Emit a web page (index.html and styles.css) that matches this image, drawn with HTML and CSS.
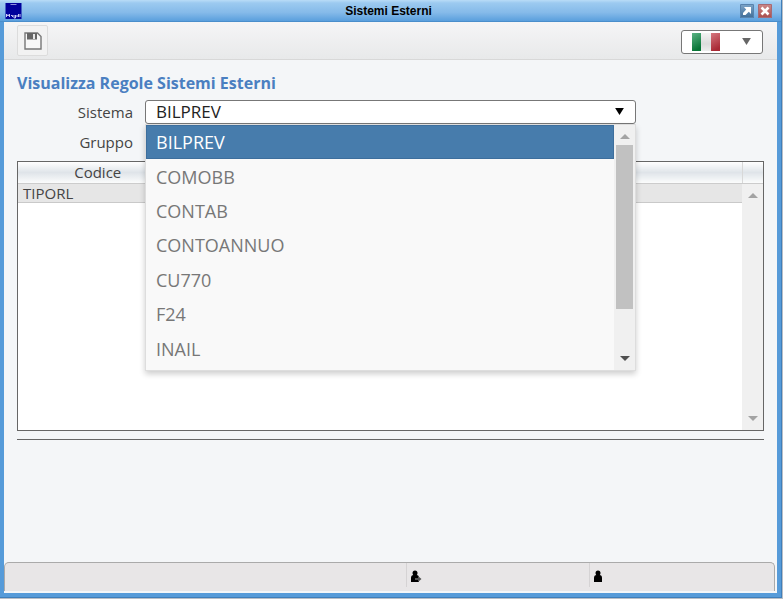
FILE: index.html
```html
<!DOCTYPE html>
<html lang="it">
<head>
    <meta charset="UTF-8">
    <meta name="viewport" content="width=device-width, initial-scale=1.0">
    <title>Sistemi Esterni</title>
    <link rel="stylesheet" href="styles.css">
</head>
<body>
    <div class="window">
        <header class="title-bar">
            <svg class="logo" viewBox="0 0 16 16" aria-hidden="true">
                <rect width="16" height="16" fill="#00009c"/>
                <path d="M5 1.500h6" stroke="#8d8ddd"/>
                <path d="M1 14v-3l1.500 2L4 11v3M5.500 12.500h1.500V14M8.500 12v3h1.500v-3M11.500 12v2M13 11v3M14.500 11v3" fill="none" stroke="#c9c9f2"/>
            </svg>
            <h1>Sistemi Esterni</h1>
            <div class="window-buttons">
                <button type="button" class="win-btn" aria-label="Ingrandisci">
                    <svg viewBox="0 0 14 14"><path d="M4 3h7v7L8.800 7.800 5.500 11 3 11V9l3.200-3.500z" fill="#fff"/></svg>
                </button>
                <button type="button" class="win-btn close" aria-label="Chiudi">
                    <svg viewBox="0 0 14 14"><path d="M3.500 3.500l7 7M10.500 3.500l-7 7" stroke="#fff" stroke-width="2.600"/></svg>
                </button>
            </div>
        </header>

        <div class="content">
            <div class="toolbar">
                <button type="button" class="tool-btn" aria-label="Salva">
                    <svg viewBox="0 0 18 18">
                        <path d="M1 1h12.500L17 4.500V17H1z" fill="#f8f8f8" stroke="#777" stroke-width="1.400"/>
                        <path d="M3 1h10v6.500H3z" fill="#666"/>
                        <path d="M9 2h2v5H9z" fill="#e8e8e8"/>
                    </svg>
                </button>
                <div class="language">
                    <select aria-label="Lingua"><option></option></select>
                    <svg class="flag" viewBox="0 0 28 18" aria-hidden="true">
                        <defs>
                            <linearGradient id="green" x2="0.300" y2="1"><stop stop-color="#5bb284"/><stop offset="1" stop-color="#087536"/></linearGradient>
                            <linearGradient id="white" x2="0" y2="1"><stop stop-color="#f4f4f4"/><stop offset="0.600" stop-color="#dcdcdc"/><stop offset="1" stop-color="#eee"/></linearGradient>
                            <linearGradient id="red" x2="0.300" y2="1"><stop stop-color="#d5777e"/><stop offset="1" stop-color="#a92a35"/></linearGradient>
                        </defs>
                        <rect width="9" height="18" fill="url(#green)"/>
                        <rect x="9" width="10" height="18" fill="url(#white)"/>
                        <rect x="19" width="9" height="18" fill="url(#red)"/>
                    </svg>
                    <svg class="arrow grey" viewBox="0 0 10 8" aria-hidden="true"><path d="M0 0h10L5 8z"/></svg>
                </div>
            </div>

            <main>
                <h2>Visualizza Regole Sistemi Esterni</h2>

                <form class="filters">
                    <label for="sistema">Sistema</label>
                    <div class="field">
                        <select id="sistema"><option>BILPREV</option></select>
                        <svg class="arrow" viewBox="0 0 10 8" aria-hidden="true"><path d="M0 0h10L5 8z"/></svg>
                        <div class="dropdown">
                            <ul role="listbox" aria-label="Sistema">
                                <li role="option" aria-selected="true" class="selected">BILPREV</li>
                                <li role="option">COMOBB</li>
                                <li role="option">CONTAB</li>
                                <li role="option">CONTOANNUO</li>
                                <li role="option">CU770</li>
                                <li role="option">F24</li>
                                <li role="option">INAIL</li>
                            </ul>
                            <div class="scrollbar">
                                <span class="up"></span>
                                <span class="track"><span class="thumb"></span></span>
                                <span class="down active"></span>
                            </div>
                        </div>
                    </div>
                    <label for="gruppo">Gruppo</label>
                    <div class="field">
                        <select id="gruppo" class="small"><option></option></select>
                    </div>
                </form>

                <div class="grid">
                    <table>
                        <colgroup>
                            <col class="col-code">
                            <col>
                            <col class="col-scroll">
                        </colgroup>
                        <thead>
                            <tr><th>Codice</th><th></th><th></th></tr>
                        </thead>
                        <tbody>
                            <tr><td>TIPORL</td><td></td><td class="blank"></td></tr>
                        </tbody>
                    </table>
                    <div class="scrollbar">
                        <span class="up"></span>
                        <span class="track"></span>
                        <span class="down"></span>
                    </div>
                </div>
                <hr>
            </main>

            <footer class="status-bar">
                <div></div>
                <div>
                    <svg viewBox="0 0 12 12" aria-hidden="true">
                        <circle cx="5" cy="3" r="2.500"/>
                        <path d="M1 12V8q0-3 2.500-3h3Q9 5 9 8v4z"/>
                        <path d="M5 8h3V6l3.500 3L8 12v-2H5z" fill="#555"/>
                    </svg>
                </div>
                <div>
                    <svg viewBox="0 0 12 12" aria-hidden="true">
                        <circle cx="5" cy="3" r="2.500"/>
                        <path d="M1 12V8q0-3 2.500-3h3Q9 5 9 8v4z"/>
                    </svg>
                </div>
            </footer>
        </div>
    </div>
</body>
</html>
```

FILE: styles.css
```css
* {
    box-sizing: border-box;
}

body {
    margin: 0;
    padding: 0 1px 1px 0;
    height: 100vh;
    overflow: hidden;
    font-family: 'Open Sans', 'Noto Sans', sans-serif;
    color: #444;
    background: #b9bec6;
}

button, select {
    font-family: inherit;
    padding: 0;
    margin: 0;
}

svg {
    display: block;
}

.window {
    display: flex;
    flex-direction: column;
    height: 100%;
    padding: 0 4px 4px;
    background: #569bd9;
    border-right: 1px solid #3f7fba;
    border-bottom: 1px solid #3f7fba;
}

/* title bar */
.title-bar {
    display: grid;
    grid-template-columns: 40px 1fr 40px;
    align-items: center;
    height: 22px;
    margin: 0 -4px;
    padding: 0 9px 0 5px;
    background: linear-gradient(to bottom, #b9dcf7, #9ccaf0 3px, #85bae9 60%, #5a9fdd);
    border-bottom: 1px solid #4a8ecb;
}

.logo {
    width: 17px;
    height: 16px;
}

.title-bar h1 {
    margin: 0;
    font: bold 12px/20px 'Liberation Sans', Arial, sans-serif;
    color: #000;
    text-align: center;
}

.window-buttons {
    display: flex;
    justify-content: flex-end;
    gap: 4px;
}

.win-btn {
    width: 14px;
    height: 14px;
    border: 0;
    border-radius: 1px;
    background: linear-gradient(to bottom, #7fa6c9, #3e6c97);
    outline: 1px solid #5883ad;
    outline-offset: -1px;
}

.win-btn.close {
    background: linear-gradient(to bottom, #cc8b8b, #a84c4c);
    outline-color: #a56a74;
}

.content {
    display: flex;
    flex: 1;
    flex-direction: column;
    background: #f4f6f8;
}

/* toolbar */
.toolbar {
    display: flex;
    align-items: center;
    justify-content: space-between;
    height: 38px;
    padding: 0 14px 0 13px;
    background: linear-gradient(to bottom, #f5f5f6, #e8e9ea);
    border-bottom: 1px solid #d8d8d8;
}

.tool-btn {
    display: flex;
    align-items: center;
    justify-content: center;
    width: 31px;
    height: 31px;
    background: #f2f2f2;
    border: 1px solid #dcdcdc;
    border-radius: 2px;
}

.tool-btn svg {
    width: 18px;
    height: 18px;
}

.language {
    position: relative;
    width: 82px;
    margin-top: 2px;
}

select {
    display: block;
    width: 100%;
    height: 24px;
    padding: 0 10px;
    appearance: none;
    background: #fff;
    border: 1px solid #777;
    border-radius: 3px;
    color: #222;
    font-size: 17px;
    line-height: 22px;
}

.flag {
    position: absolute;
    top: 3px;
    left: 11px;
    width: 28px;
    height: 18px;
    pointer-events: none;
}

.arrow {
    position: absolute;
    top: 8px;
    right: 12px;
    width: 9px;
    height: 7px;
    fill: #000;
    pointer-events: none;
}

.arrow.grey {
    fill: #666;
}

/* form */
main {
    flex: 1;
    padding: 12px 13px 0;
}

h2 {
    margin: 0 0 6px;
    font-size: 16px;
    line-height: 22px;
    color: #4a7fc1;
}

.filters {
    display: grid;
    grid-template-columns: 116px 1fr;
    column-gap: 12px;
    row-gap: 6px;
    align-items: center;
    padding-right: 128px;
}

.filters label {
    font-size: 15px;
    line-height: 24px;
    text-align: right;
}

.field {
    position: relative;
}

.filters .small {
    height: 20px;
}

.dropdown {
    position: absolute;
    z-index: 1;
    top: 24px;
    left: 0;
    right: 0;
    display: flex;
    height: 247px;
    background: #f9f9f9;
    border: 1px solid #ddd;
    box-shadow: 0 3px 6px rgba(0, 0, 0, 0.2);
}

.dropdown ul {
    display: flex;
    flex: 1;
    flex-direction: column;
    margin: 0;
    padding: 0 0 4px;
    list-style: none;
}

.dropdown li {
    display: flex;
    flex: 1;
    align-items: center;
    padding: 0 10px;
    font-size: 18px;
    color: #777;
}

.dropdown li.selected {
    background: #477cac;
    box-shadow: inset 0 0 0 1px #3d6e9c;
    color: #fff;
}

/* scrollbars */
.scrollbar {
    display: flex;
    flex-direction: column;
    align-items: center;
    width: 21px;
    padding: 9px 0;
    background: #f0f0f0;
}

.up, .down {
    width: 0;
    height: 0;
    border: 5px solid transparent;
}

.up {
    border-top-width: 0;
    border-bottom-color: #a3a3a3;
}

.down {
    border-bottom-width: 0;
    border-top-color: #a3a3a3;
}

.down.active {
    border-top-color: #505050;
}

.track {
    flex: 1;
    width: 17px;
    padding: 6px 0;
}

.thumb {
    display: block;
    height: 80%;
    background: #c1c1c1;
}

/* data grid */
.grid {
    position: relative;
    height: 270px;
    margin-top: 7px;
    background: #fff;
    border: 1px solid #666;
}

table {
    width: 100%;
    table-layout: fixed;
    border-collapse: collapse;
    font-size: 15px;
    line-height: 18px;
}

.col-code {
    width: 160px;
}

.col-scroll {
    width: 21px;
}

th {
    height: 21px;
    padding: 0;
    font-weight: normal;
    background: linear-gradient(to bottom, #fff, #dfe4e9 50%, #fbfcfc);
    border-bottom: 1px solid #ccc;
    border-right: 1px solid #d8d8d8;
}

th:last-child {
    border-right: 0;
}

td {
    height: 19px;
    padding: 0 5px;
    background: #e6e6e6;
    border-bottom: 1px solid #c9c9c9;
}

td.blank {
    background: none;
    border: 0;
}

.grid .scrollbar {
    position: absolute;
    top: 22px;
    right: 0;
    bottom: 0;
}

hr {
    height: 1px;
    margin: 8px 0 0;
    background: #666;
    border: 0;
}

/* status bar */
.status-bar {
    display: grid;
    grid-template-columns: 401px 183px 1fr;
    height: 29px;
    margin: 0 2px 2px 0;
    background: #e8e6e7;
    border: 1px solid #aaa;
    border-bottom: 0;
    border-radius: 5px 5px 0 0;
}

.status-bar div {
    height: 24px;
    padding: 7px 3px;
}

.status-bar div + div {
    border-left: 1px solid #d5d3d4;
}

.status-bar svg {
    width: 12px;
    height: 12px;
}
```
